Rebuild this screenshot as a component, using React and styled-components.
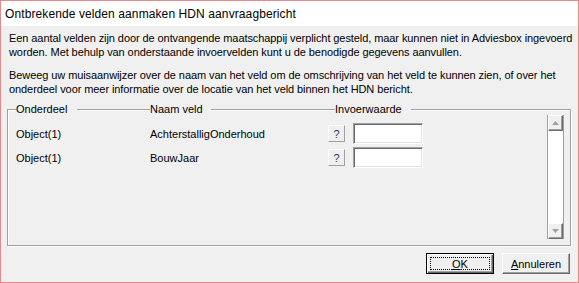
import React from 'react'
import styled, { createGlobalStyle } from 'styled-components'

const GlobalStyle = createGlobalStyle`
  html, body {
    margin: 0;
    padding: 0;
    background: #f0f0f0;
  }
  * { box-sizing: border-box; }
`;

const Window = styled.div`
  width: 579px;
  height: 283px;
  border: 1px solid #e48a8a;
  display: flex;
  flex-direction: column;
  font-family: "Liberation Sans", Arial, sans-serif;
  font-size: 11px;
  color: #000;
  background: #f0f0f0;
`;

const TitleBar = styled.div`
  height: 25px;
  background: #fff;
  display: flex;
  align-items: center;
  padding-left: 4px;
  font-family: "Liberation Sans", Arial, sans-serif;
  font-size: 12px;
  letter-spacing: 0.1px;
  color: #000;
`;

const Body = styled.div`
  flex: 1;
  display: flex;
  flex-direction: column;
  padding: 5px 7px 8px 6px;
`;

const Text = styled.p`
  margin: 0 0 ${(p) => p.$gap || 0}px 2px;
  line-height: 14px;
  white-space: nowrap;
  letter-spacing: -0.08px;
`;

const Group = styled.div`
  margin-top: 13px;
  height: 137px;
  border: 1px solid #a0a0a0;
  box-shadow: inset 1px 1px 0 #fff, 1px 1px 0 #fff;
  display: flex;
  flex-direction: column;
`;

const Header = styled.div`
  display: flex;
  height: 12px;
  margin-top: -7px;
  line-height: 12px;
`;

const Caption = styled.span`
  margin-left: ${(p) => p.$left}px;
  width: ${(p) => p.$w}px;
  background: #f0f0f0;
  white-space: nowrap;
`;

const Content = styled.div`
  flex: 1;
  display: flex;
`;

const Rows = styled.div`
  flex: 1;
  padding: 8px 0 0 8px;
  display: flex;
  flex-direction: column;
  gap: 3px;
`;

const Row = styled.div`
  display: flex;
  align-items: center;
  height: 21px;
`;

const Cell = styled.span`
  width: ${(p) => p.$w}px;
  white-space: nowrap;
`;

const HelpButton = styled.button`
  width: 17px;
  height: 17px;
  margin-right: 8px;
  padding: 0;
  background: #f0f0f0;
  border: 1px solid;
  border-color: #fff #a0a0a0 #a0a0a0 #fff;
  font-family: "Liberation Sans", Arial, sans-serif;
  font-size: 11px;
  color: #2a3a5a;
  line-height: 14px;
`;

const Field = styled.input`
  width: 70px;
  height: 21px;
  background: #fff;
  border: 1px solid;
  border-color: #a0a0a0 #fff #fff #a0a0a0;
  box-shadow: inset 1px 1px 0 #696969, inset -1px -1px 0 #e3e3e3;
  outline: none;
`;

const ScrollBar = styled.div`
  width: 17px;
  height: 124px;
  margin-right: 6px;
  background: #fff;
  border-left: 1px solid #a0a0a0;
  border-right: 1px solid #a0a0a0;
  display: flex;
  flex-direction: column;
  justify-content: space-between;
`;

const ArrowButton = styled.div`
  height: 16px;
  background: #f0f0f0;
  border: 1px solid;
  border-color: #fff #696969 #696969 #fff;
  box-shadow: inset -1px -1px 0 #a0a0a0;
  display: flex;
  align-items: center;
  justify-content: center;
`;

const Footer = styled.div`
  display: flex;
  justify-content: flex-end;
  gap: 8px;
  margin-top: 7px;
  padding-right: 1px;
`;

const Button = styled.button`
  width: 68px;
  height: 21px;
  padding: 0;
  background: #f0f0f0;
  font-family: "Liberation Sans", Arial, sans-serif;
  font-size: 11px;
  color: #000;
  border: 1px solid ${(p) => (p.$default ? '#000' : '#fff')};
  border-right-color: ${(p) => (p.$default ? '#000' : '#696969')};
  border-bottom-color: ${(p) => (p.$default ? '#000' : '#696969')};
  box-shadow: ${(p) =>
    p.$default
      ? 'inset 1px 1px 0 #fff, inset -1px -1px 0 #696969, inset -2px -2px 0 #a0a0a0'
      : 'inset -1px -1px 0 #a0a0a0'};
  outline: ${(p) => (p.$default ? '1px dotted #000' : 'none')};
  outline-offset: -5px;
`;

const Triangle = ({ down }) => (
  <svg width="7" height="4" viewBox="0 0 7 4">
    <path d={down ? 'M0 0H7L3.5 4Z' : 'M0 4H7L3.5 0Z'} fill="#a0a0a0" />
  </svg>
);

const fields = [
  { part: 'Object(1)', name: 'AchterstalligOnderhoud' },
  { part: 'Object(1)', name: 'BouwJaar' },
];

export default function App() {
  return (
    <>
      <GlobalStyle />
      <Window>
        <TitleBar>Ontbrekende velden aanmaken HDN aanvraagbericht</TitleBar>
        <Body>
          <Text $gap={9}>
            Een aantal velden zijn door de ontvangende maatschappij verplicht gesteld, maar kunnen niet in Adviesbox ingevoerd
            <br />
            worden. Met behulp van onderstaande invoervelden kunt u de benodigde gegevens aanvullen.
          </Text>
          <Text>
            Beweeg uw muisaanwijzer over de naam van het veld om de omschrijving van het veld te kunnen zien, of over het
            <br />
            onderdeel voor meer informatie over de locatie van het veld binnen het HDN bericht.
          </Text>
          <Group>
            <Header>
              <Caption $left={8} $w={61}>Onderdeel</Caption>
              <Caption $left={73} $w={61}>Naam veld</Caption>
              <Caption $left={124} $w={76}>Invoerwaarde</Caption>
            </Header>
            <Content>
              <Rows>
                {fields.map((f) => (
                  <Row key={f.name}>
                    <Cell $w={134}>{f.part}</Cell>
                    <Cell $w={178}>{f.name}</Cell>
                    <HelpButton>?</HelpButton>
                    <Field />
                  </Row>
                ))}
              </Rows>
              <ScrollBar>
                <ArrowButton><Triangle /></ArrowButton>
                <ArrowButton><Triangle down /></ArrowButton>
              </ScrollBar>
            </Content>
          </Group>
          <Footer>
            <Button $default><u>O</u>K</Button>
            <Button><u>A</u>nnuleren</Button>
          </Footer>
        </Body>
      </Window>
    </>
  );
}
